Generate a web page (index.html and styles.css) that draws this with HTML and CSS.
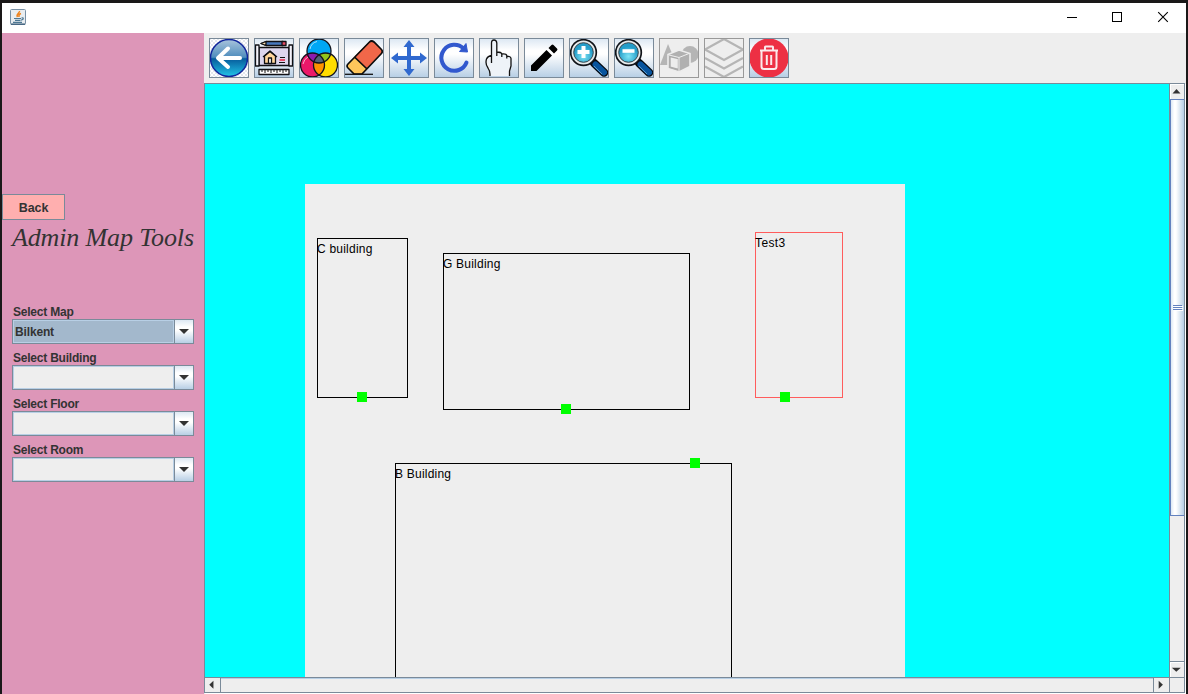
FILE: index.html
```html
<!DOCTYPE html>
<html lang="en">
<head>
<meta charset="utf-8">
<title>Admin Map Tools</title>
<link rel="stylesheet" href="styles.css">
</head>
<body>
<div class="window">
  <header class="titlebar">
    <svg class="java" width="16" height="16" viewBox="0 0 16 16"><rect x=".5" y=".5" width="15" height="15" rx="1" fill="#e9edf0" stroke="#7890a5"/><path d="M1 15.2h14" stroke="#456782" stroke-width="1.5"/><path d="M9.500 2C10 4 5.500 5 7.500 8M11 4.500C8 5.500 9 6.500 9 8" fill="none" stroke="#ee8420" stroke-width="1.500"/><path d="M4 9.500h7M5 11.300h5.500M3 13.300h9M11.500 9q2.500-.5 1.500 1.200l-2 1" fill="none" stroke="#4d7894" stroke-width="1.200"/></svg>
    <div class="controls">
      <svg width="46" height="30" viewBox="0 0 46 30"><path d="M18 14.500h10" stroke="#000"/></svg>
      <svg width="46" height="30" viewBox="0 0 46 30"><rect x="17.500" y="9.500" width="9" height="9" fill="none" stroke="#000"/></svg>
      <svg width="46" height="30" viewBox="0 0 46 30"><path d="M17.200 9.200l9.600 9.600M26.800 9.200l-9.600 9.600" stroke="#000" stroke-width="1.100"/></svg>
    </div>
  </header>
  <div class="content">
    <aside class="sidebar">
      <button class="back">Back</button>
      <h1 class="heading">Admin Map Tools</h1>
      <div class="fields">
        <div class="label">Select Map</div>
        <div class="combo"><span class="value selected">Bilkent</span><span class="arrow"><svg width="10" height="5" viewBox="0 0 10 5"><path d="M0 0h10L5 5z"/></svg></span></div>
        <div class="label">Select Building</div>
        <div class="combo"><span class="value"></span><span class="arrow"><svg width="10" height="5" viewBox="0 0 10 5"><path d="M0 0h10L5 5z"/></svg></span></div>
        <div class="label">Select Floor</div>
        <div class="combo"><span class="value"></span><span class="arrow"><svg width="10" height="5" viewBox="0 0 10 5"><path d="M0 0h10L5 5z"/></svg></span></div>
        <div class="label">Select Room</div>
        <div class="combo"><span class="value"></span><span class="arrow"><svg width="10" height="5" viewBox="0 0 10 5"><path d="M0 0h10L5 5z"/></svg></span></div>
      </div>
    </aside>
    <main class="main">
      <nav class="toolbar">
        <button class="tool"><svg viewBox="1 1 38 38">
          <defs><linearGradient id="blue" x2="0" y2="1"><stop stop-color="#a9c4dc"/><stop offset=".48" stop-color="#4f8dbd"/><stop offset=".52" stop-color="#075c9c"/><stop offset="1" stop-color="#21c4e8"/></linearGradient>
          <radialGradient id="lens" cx=".5" cy=".7"><stop stop-color="#7fe4f5"/><stop offset="1" stop-color="#249dc9"/></radialGradient>
          <pattern id="check" width="4" height="4" patternUnits="userSpaceOnUse"><path d="M0 0h4v4H0z" fill="#fff"/><path d="M0 0h2v2H0zM2 2h2v2H2z" fill="#e3e7ed"/></pattern></defs>
          <path d="M1 1h38v38H1z" fill="url(#check)"/><circle cx="20" cy="20" r="18.500" fill="url(#blue)" stroke="#10259b" stroke-width="1.500"/><path d="M31 20H10M19 10.500L9 20l10 9" fill="none" stroke="#fff" stroke-width="4" stroke-linecap="round" stroke-linejoin="round"/></svg></button>
        <button class="tool"><svg viewBox="1 1 38 38"><g stroke="#101014" stroke-width="1.300" stroke-linejoin="round"><path d="M5 9.500h30v18H5z" fill="#ddd6ee"/><path d="M1.500 7h3.500v21H1.500zM35 7h3.500v21H35z" fill="#f4f2fa"/><path d="M7 5.500l5-2h17v4H12z" fill="#4778bd"/><path d="M7 5.500l5-2v4z" fill="#ffe0b0"/><path d="M28 3.500h4v4h-4z" fill="#e84d66"/><path d="M10.500 18l5.500-4.500 5.500 4.500v7.500h-11z" fill="#ffd59b"/><path d="M9 19l7-6 7 6" fill="none"/><path d="M14.500 20h3v5.500h-3z" fill="#fff"/><path d="M5 31.500h30v5H5z" fill="#fff"/></g><path d="M26 19.500h5M25 24.500h6" stroke="#111"/><path d="M25.500 22h5.500" stroke="#e8405e" stroke-width="1.800"/><path d="M8 32v2M11 32v3M14 32v2M17 32v3M20 32v2M23 32v3M26 32v2M29 32v3M32 32v2" stroke="#111"/></svg></button>
        <button class="tool"><svg viewBox="1 1 38 38"><defs><clipPath id="cTop"><circle cx="20" cy="13" r="12"/></clipPath><clipPath id="cLeft"><circle cx="13.500" cy="27" r="12"/></clipPath></defs><circle cx="20" cy="13" r="12" fill="#00a7f5"/><circle cx="13.500" cy="27" r="12" fill="#ec1869"/><circle cx="26.500" cy="27" r="12" fill="#ffdd00"/><g clip-path="url(#cTop)"><circle cx="13.500" cy="27" r="12" fill="#8b1cad"/><circle cx="26.500" cy="27" r="12" fill="#91c51a"/></g><g clip-path="url(#cLeft)"><circle cx="26.500" cy="27" r="12" fill="#ff9200"/><g clip-path="url(#cTop)"><circle cx="26.500" cy="27" r="12" fill="#536477"/></g></g><g fill="none" stroke="#14141c" stroke-width="1.300"><circle cx="20" cy="13" r="12"/><circle cx="13.500" cy="27" r="12"/><circle cx="26.500" cy="27" r="12"/></g><path d="M11 11q1-6 7-7.500M4 26q1-5 5-7" fill="none" stroke="#fff" stroke-width="1" opacity=".65"/></svg></button>
        <button class="tool"><svg viewBox="1 1 38 38"><path d="M10.500 18.500L25 4q2.500-2.500 5 0l7 7q3 2.500 0 5L22 31z" fill="#f16749"/><path d="M10.500 19L4 26q-1.500 2 0 4l6 6h8l5-5z" fill="#ffc65b"/><path d="M10.500 19L23 31M4 26L25.500 4q2-2 4.500 0l7 7q2.500 2.500 0 5L18 36h-8l-6-6q-2-2 0-4z" fill="none" stroke="#0c0c0c" stroke-width="1.700"/><path d="M1 36.300h28" stroke="#111" stroke-width="1.300"/></svg></button>
        <button class="tool"><svg viewBox="1 1 38 38"><path d="M20 2l5.500 7H22v9h9v-3.500l7 5.500-7 5.500V22h-9v9h3.500L20 38l-5.500-7H18v-9H9v3.500L2 20l7-5.500V18h9V9h-3.500z" fill="#3069cf"/></svg></button>
        <button class="tool"><svg viewBox="1 1 38 38"><path d="M32.500 24.500A13 13 0 1 1 29.500 10.500" fill="none" stroke="#3158ce" stroke-width="4" stroke-linecap="round"/><path d="M32 5.500L33.500 14l-8-.5z" fill="#3158ce" stroke="#3158ce"/></svg></button>
        <button class="tool"><svg viewBox="1 1 38 38"><path d="M11 38v-2q0-3-2-6Q6 26 7.500 21q1.500-3 5-3.500V5q0-3 2.500-3t2.800 3v9q4.500 0 5 2 4.500-.5 5 1.500 4-.5 4.200 2.500v7.500l-1.500 4V38" fill="#eef3f8"/><path d="M11 38v-2q0-3-2-6Q6 26 7.500 21q1.500-3 5-3.500V25 5q0-3 2.500-3t2.800 3v13-4q4.500 0 5 2v3-3q4.500-.5 5 1.500v3-2q4-.5 4.200 2v7.500l-1.500 5V38" fill="none" stroke="#111" stroke-width="1.300"/></svg></button>
        <button class="tool"><svg viewBox="1 1 38 38"><path d="M7 33v-5.500L22.500 12l5.500 5.500L12.500 33zM24.500 10l3-3q1-1 2 0l3.500 3.500q1 1 0 2l-3 3z" fill="#000"/></svg></button>
        <button class="tool"><svg viewBox="1 1 38 38"><path d="M25 25l10 9.500" stroke="#05080d" stroke-width="8.500" stroke-linecap="round"/><path d="M26.500 26.500l8.500 8" stroke="#07549e" stroke-width="6" stroke-linecap="round"/><path d="M25 28l8 8" stroke="#5a98c7" stroke-width="1"/><circle cx="14.500" cy="14.500" r="12.800" fill="#e7ebec" stroke="#101318" stroke-width="1.700"/><circle cx="14.500" cy="14.500" r="9.800" fill="url(#lens)" stroke="#39444b"/><path d="M14.500 8v12M8.500 14h12" stroke="#fff" stroke-width="4"/></svg></button>
        <button class="tool"><svg viewBox="1 1 38 38"><path d="M25 25l10 9.500" stroke="#05080d" stroke-width="8.500" stroke-linecap="round"/><path d="M26.500 26.500l8.500 8" stroke="#07549e" stroke-width="6" stroke-linecap="round"/><path d="M25 28l8 8" stroke="#5a98c7" stroke-width="1"/><circle cx="14.500" cy="14.500" r="12.800" fill="#e7ebec" stroke="#101318" stroke-width="1.700"/><circle cx="14.500" cy="14.500" r="9.800" fill="url(#lens)" stroke="#39444b"/><path d="M8.500 13h12" stroke="#fff" stroke-width="3.600"/></svg></button>
        <button class="tool disabled"><svg viewBox="1 1 38 38"><path d="M1 27L9 6l9 21z" fill="#b5b5b5"/><circle cx="31" cy="16.500" r="8.500" fill="#b5b5b5"/><path d="M9 16.500L20 12l11 3.500v13L20 34 9 30.500z" fill="#b0b0b0" stroke="#ededed" stroke-width="1.600"/><path d="M11 18.500l8.500 2v11l-8.500-2.300z" fill="#ededed" stroke="#aaa" stroke-width="1.400"/><path d="M10 17l10 2.500 10-4M20 20v13" fill="none" stroke="#eee"/></svg></button>
        <button class="tool disabled"><svg viewBox="1 1 38 38"><path d="M20 1L1 11.500 20 22l19-10.500zM1 20l19 10.500L39 20M1 28.500L20 39l19-10.500" fill="none" stroke="#b5b5b5" stroke-width="2.200"/></svg></button>
        <button class="tool"><svg viewBox="1 1 38 38"><circle cx="20" cy="20" r="19.500" fill="#ed3044"/><path d="M11 12.500h18M16 12V9q0-.5.500-.5h7q.5 0 .5.500v3M12.500 13v15.500q0 2.500 2.500 2.500h10q2.500 0 2.500-2.500V13M17.800 17v10M22.200 17v10" fill="none" stroke="#fbe9ec" stroke-width="2"/></svg></button>
      </nav>
      <div class="scrollpane">
        <div class="viewport">
          <div class="map">
            <div class="room c">C building<i></i></div>
            <div class="room g">G Building<i></i></div>
            <div class="room t">Test3<i></i></div>
            <div class="room b">B Building<i></i></div>
          </div>
        </div>
        <div class="vbar">
          <svg class="up" width="14" height="15" viewBox="0 0 14 15"><path d="M2.500 9.500h8L6.500 5z"/></svg>
          <div class="thumb"><b></b><b></b><b></b></div>
          <svg class="down" width="14" height="16" viewBox="0 0 14 16"><path d="M1.500 6h9.500L6.250 10.500z"/></svg>
        </div>
        <div class="hbar">
          <svg class="left" width="16" height="14" viewBox="0 0 16 14"><path d="M9 2.500v8.500L4.500 6.750z"/></svg>
          <svg class="right" width="16" height="14" viewBox="0 0 16 14"><path d="M5 2.500v8.500L9.500 6.750z"/></svg>
        </div>
        <div class="corner"></div>
      </div>
    </main>
  </div>
</div>
</body>
</html>
```
FILE: styles.css
```css
* { box-sizing: border-box; }
body {
  margin: 0;
  width: 1188px;
  height: 694px;
  overflow: hidden;
  background: #1a1818;
  font: 12px "Liberation Sans", Arial, sans-serif;
}
svg { display: block; }
.window {
  height: 694px;
  padding: 3px 2px 0;
  display: flex;
  flex-direction: column;
}
.titlebar {
  height: 30px;
  background: #fff;
  display: flex;
  justify-content: space-between;
}
.java { margin: 6px 0 0 8px; }
.controls { display: flex; margin-right: -1px; }
.content { flex: 1; display: flex; min-height: 0; }
.sidebar {
  width: 202px;
  background: #dd96b8;
  color: #333;
}
.back {
  display: block;
  width: 63px;
  height: 26px;
  margin-top: 161px;
  padding: 1px 0 0;
  background: #ffafaf;
  border: 1px solid #7a8a99;
  font: bold 12.5px "Liberation Sans", Arial, sans-serif;
  letter-spacing: -.1px;
  color: #333;
}
.heading {
  margin: 0 0 0 10px;
  height: 84px;
  padding-top: 3px;
  white-space: nowrap;
  font: italic 26px/30px "Liberation Serif", "Times New Roman", serif;
  letter-spacing: -.14px;
}
.fields { width: 182px; margin-left: 10px; }
.label {
  height: 15px;
  padding-left: 1px;
  font-weight: bold;
  line-height: 17px;
  letter-spacing: -.22px;
}
.combo {
  height: 25px;
  margin-bottom: 6px;
  display: flex;
  border: 1px solid #7a8a99;
  background: #eee;
}
.value {
  flex: 1;
  border: 1px solid #b8cfe5;
  padding-left: 1px;
  font-weight: bold;
  line-height: 23px;
  letter-spacing: -.15px;
}
.selected { background: #a3b8cc; }
.arrow {
  width: 19px;
  border-left: 1px solid #7a8a99;
  background: linear-gradient(#dde8f3, #fff 30%, #fff 45%, #b8cfe5);
  display: grid;
  place-items: center;
}
.arrow path { fill: #333; }
.main {
  width: 982px;
  display: flex;
  flex-direction: column;
  background: #eee;
}
.toolbar {
  height: 50px;
  padding: 5px;
  display: flex;
  gap: 5px;
}
.tool {
  width: 40px;
  height: 40px;
  padding: 0;
  border: 1px solid #7a8a99;
  background: linear-gradient(#dde8f3, #fff 30%, #fff 40%, #b8cfe5);
}
.tool svg { width: 38px; height: 38px; }
.disabled { background: #eee; border-color: #999; }
.scrollpane {
  width: 981px;
  height: 610px;
  border: 1px solid #7a8a99;
  display: grid;
  grid-template: 593px 15px / 964px 15px;
  box-shadow: 1px 1px #fff;
}
.viewport { background: #0ff; overflow: hidden; padding: 100px 0 0 100px; }
.map { position: relative; width: 600px; height: 600px; background: #eee; }
.room {
  position: absolute;
  border: 1px solid #000;
  color: #000;
  line-height: 14px;
  padding-top: 3px;
  text-indent: -1px;
  white-space: nowrap;
  letter-spacing: .22px;
}
.room i {
  position: absolute;
  width: 10px;
  height: 10px;
  background: #0f0;
}
.c { left: 12px; top: 54px; width: 91px; height: 160px; }
.c i { left: 39px; top: 153px; }
.g { left: 138px; top: 69px; width: 247px; height: 157px; }
.g i { left: 117px; top: 150px; }
.t { left: 450px; top: 48px; width: 88px; height: 166px; border-color: #ff5c5c; letter-spacing: .4px; }
.t i { left: 24px; top: 159px; }
.b { left: 90px; top: 279px; width: 337px; height: 300px; }
.b i { left: 294px; top: -6px; }
.vbar {
  display: flex;
  flex-direction: column;
  border-left: 1px solid #7a8a99;
  background: #eee;
}
.vbar path, .hbar path { fill: #333; }
.up, .down { box-shadow: inset 1px 1px #fff; }
.thumb {
  height: 417px;
  border: 1px solid #6382bf;
  border-right: 0;
  background: linear-gradient(90deg, #dce8f4, #fff 25%, #fff 38%, #b8cfe5);
  display: flex;
  flex-direction: column;
  justify-content: center;
  align-items: center;
  gap: 1px;
}
.thumb b { width: 9px; height: 1px; background: #6382bf; box-shadow: 1px 1px #fff; }
.down { margin-top: auto; border-top: 1px solid #7a8a99; }
.hbar {
  border-top: 1px solid #7a8a99;
  background: #eee;
  display: flex;
  justify-content: space-between;
  box-shadow: inset 0 1px #b8cfe5;
}
.left { border-right: 1px solid #7a8a99; background: #eee; }
.right { border-left: 1px solid #7a8a99; background: #eee; }
.corner { border-top: 1px solid #7a8a99; border-left: 1px solid #7a8a99; }
```
